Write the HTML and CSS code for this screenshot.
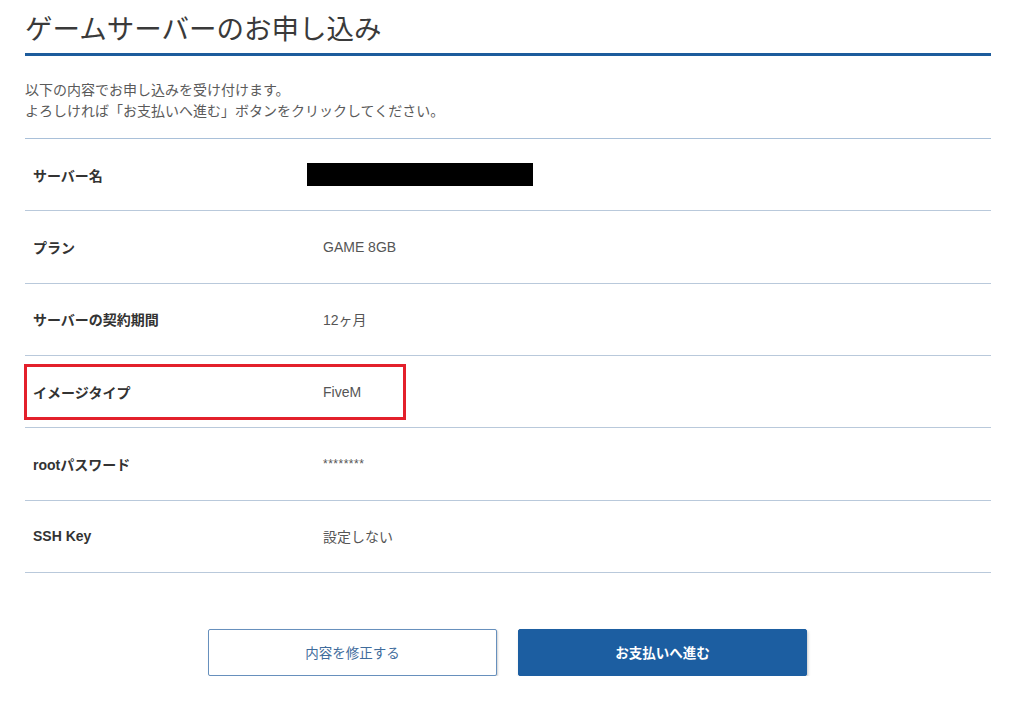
FILE: index.html
```html
<!DOCTYPE html>
<html lang="ja">
<head>
<meta charset="utf-8">
<title>ゲームサーバーのお申し込み</title>
<link rel="stylesheet" href="styles.css">
</head>
<body>
<main class="page">
  <h1 class="title">ゲームサーバーのお申し込み</h1>
  <p class="intro">以下の内容でお申し込みを受け付けます。<br>よろしければ「お支払いへ進む」ボタンをクリックしてください。</p>
  <div class="table">
    <div class="row">
      <div class="label">サーバー名</div>
      <div class="value"><span class="redact"></span></div>
    </div>
    <div class="row">
      <div class="label">プラン</div>
      <div class="value">GAME 8GB</div>
    </div>
    <div class="row">
      <div class="label">サーバーの契約期間</div>
      <div class="value">12ヶ月</div>
    </div>
    <div class="row row-marked">
      <div class="label">イメージタイプ</div>
      <div class="value">FiveM</div>
      <div class="mark"></div>
    </div>
    <div class="row">
      <div class="label">rootパスワード</div>
      <div class="value value-small">********</div>
    </div>
    <div class="row">
      <div class="label">SSH Key</div>
      <div class="value">設定しない</div>
    </div>
  </div>
  <div class="actions">
    <button class="btn btn-outline" type="button">内容を修正する</button>
    <button class="btn btn-primary" type="button">お支払いへ進む</button>
  </div>
</main>
</body>
</html>
```

FILE: styles.css
```css
* { box-sizing: border-box; }

html, body {
  margin: 0;
  padding: 0;
  background: #ffffff;
}

body {
  font-family: "Liberation Sans", "Noto Sans CJK JP", sans-serif;
  color: #333333;
}

.page {
  width: 966px;
  margin-left: 25px;
}

.title {
  margin: 0;
  padding-top: 11px;
  padding-bottom: 4px;
  font-size: 27.5px;
  line-height: 38px;
  font-weight: 400;
  color: #3a3a3a;
  border-bottom: 3px solid #1d5c9c;
}

.intro {
  margin: 0;
  padding: 24px 0 16px;
  font-size: 14px;
  line-height: 21px;
  color: #5a5a5a;
}

.table {
  border-top: 1px solid #a9c0d9;
}

.row {
  position: relative;
  display: grid;
  grid-template-columns: 298px 1fr;
  align-items: center;
  height: 72.33px;
  border-bottom: 1px solid #b9c9db;
}

.label {
  padding-left: 8px;
  font-size: 14px;
  font-weight: 700;
  color: #333333;
}

.value {
  font-size: 14px;
  color: #555555;
  display: flex;
  align-items: center;
}

.value-small {
  font-size: 12px;
  letter-spacing: 0.5px;
}

.redact {
  display: block;
  margin-left: -16px;
  width: 226px;
  height: 23px;
  background: #000000;
}

.mark {
  position: absolute;
  left: -1px;
  top: 8px;
  width: 382px;
  height: 56px;
  border: 3px solid #e3202b;
}

.actions {
  display: flex;
  justify-content: center;
  gap: 21px;
  padding-top: 56px;
  padding-right: 1px;
}

.btn {
  width: 289px;
  height: 47px;
  border-radius: 2px;
  font-family: "Liberation Sans", "Noto Sans CJK JP", sans-serif;
  font-size: 13.5px;
  cursor: pointer;
}

.btn-outline {
  background: #ffffff;
  border: 1px solid #6790bd;
  color: #3f6c9c;
  box-shadow: 1px 1px 2px rgba(0, 0, 0, 0.18);
}

.btn-primary {
  background: #1c5ea1;
  border: 1px solid #1c5ea1;
  color: #ffffff;
  font-weight: 700;
  box-shadow: 1px 2px 3px rgba(0, 0, 0, 0.22);
}
```
